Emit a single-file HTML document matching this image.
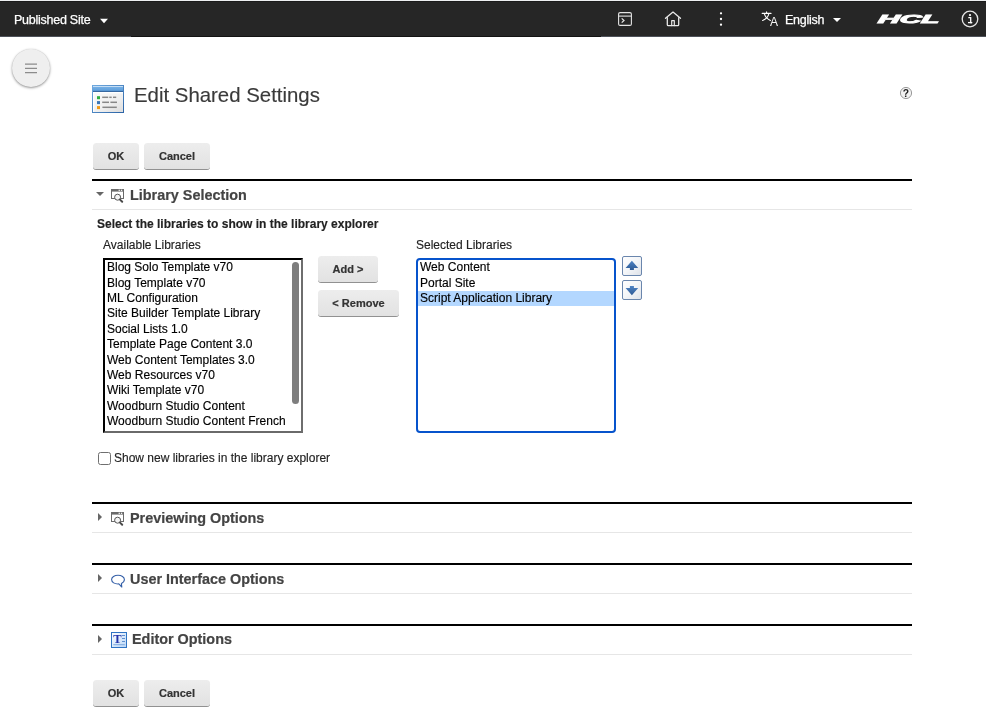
<!DOCTYPE html>
<html lang="en">
<head>
<meta charset="utf-8">
<title>Edit Shared Settings</title>
<style>
*{box-sizing:border-box;margin:0;padding:0}
html,body{width:986px;height:713px;overflow:hidden;background:#fff}
body{position:relative;font-family:"Liberation Sans",Arial,Helvetica,sans-serif;font-size:12px;color:#000}
#wrap{position:absolute;left:0;top:0;width:986px;height:713px;will-change:transform}
.abs{position:absolute}
#topbar{position:absolute;left:0;top:1px;width:986px;height:36px;background:linear-gradient(#1b1b1b 0,#1b1b1b 1px,#262626 1px,#262626 35px,#4d5159 35px,#4d5159 36px)}
#top0{position:absolute;left:0;top:0;width:986px;height:1px;background:#edeff1}
#topbar .dk{position:absolute;left:131px;top:35px;width:470px;height:1px;background:#131313}
#topbar .t{position:absolute;color:#fff;font-size:12.5px;line-height:16px;white-space:nowrap;letter-spacing:-.25px;-webkit-text-stroke:.25px #fff}
#menu{position:absolute;left:12px;top:49px;width:38px;height:38px;border-radius:50%;background:#efefef;box-shadow:0 1px 2.5px rgba(0,0,0,.42),0 0 1px rgba(0,0,0,.18)}
#menu i{position:absolute;left:13px;width:12px;height:1.5px;background:#8a8a8a}
h1{-webkit-text-stroke:.15px #3a3a3a;position:absolute;left:134px;top:83px;font-size:20.4px;line-height:24px;font-weight:normal;color:#3a3a3a;white-space:nowrap}
.btn{position:absolute;height:26px;background:linear-gradient(#ededed,#e2e2e2);border-radius:3.500px;box-shadow:0 1px 0 #919191,0 1px .5px rgba(0,0,0,.15);-webkit-text-stroke:.2px #333;font-weight:bold;font-size:11px;color:#333;text-align:center;line-height:26px;white-space:nowrap}
.sec{position:absolute;left:92px;width:820px;height:31px;border-top:2px solid #000;border-bottom:1px solid #e6e6e6}
.sec .h{position:absolute;left:38px;top:5px;-webkit-text-stroke:.2px #444;font-size:14.4px;line-height:18px;font-weight:bold;color:#444;white-space:nowrap}
.tri-d{position:absolute;width:0;height:0;border-left:4px solid transparent;border-right:4px solid transparent;border-top:4px solid #666}
.tri-r{position:absolute;width:0;height:0;border-top:4px solid transparent;border-bottom:4px solid transparent;border-left:4.5px solid #666}
.lbl{position:absolute;-webkit-text-stroke:.15px currentColor;font-size:12px;line-height:14px;white-space:nowrap;color:#222}
.list{position:absolute;background:#fff;overflow:hidden}
.list div{-webkit-text-stroke:.15px #000;height:15px;line-height:15px;padding-left:2px;font-size:12px;white-space:nowrap;color:#000}
#avail{left:103px;top:258px;width:200px;height:175px;border:2px solid #000;border-color:#000 #6e6e6e #6a6a6a #000}
#sel{left:416px;top:258px;width:200px;height:175px;border:2px solid #0653cc;border-radius:4px}
#sel .hl{background:#b3d7ff}
.thumb{position:absolute;left:292px;top:262px;width:7px;height:142px;border-radius:3.5px;background:#7e7e7e}
.ib{position:absolute;width:20px;height:20px;border:1px solid #6583ad;border-radius:2px;background:linear-gradient(135deg,#ffffff 0%,#f4f6f9 50%,#dfe3ea 100%)}
#cb{position:absolute;left:98px;top:452px;width:13px;height:13px;border:1px solid #6f6f6f;border-radius:2.5px;background:#fff}
</style>
</head>
<body>
<div id="wrap">

<div id="top0"></div>
<div id="topbar">
  <div class="dk"></div>
  <div class="t" style="left:14px;top:11px">Published Site</div>
  <svg class="abs" style="left:99px;top:17px" width="10" height="6" viewBox="0 0 10 6"><path d="M1 .8h8L5 5.300z" fill="#fff"/></svg>

  <!-- panel icon -->
  <svg class="abs" style="left:617px;top:10px" width="16" height="16" viewBox="0 0 16 16" fill="none" stroke="#e4e4e4" stroke-width="1.1">
    <rect x="1.6" y="1.6" width="12.8" height="12.8" rx="1.5"/>
    <path d="M1.6 5.1h12.8"/>
    <path d="M4.700 7.400l2.300 2.100-2.300 2.100" stroke-width="1.25"/>
  </svg>
  <!-- home -->
  <svg class="abs" style="left:663px;top:9px" width="20" height="18" viewBox="0 0 20 18" fill="none" stroke="#e8e8e8" stroke-width="1.3" stroke-linejoin="round" stroke-linecap="round">
    <path d="M2.500 8.300L10 2.100l7.500 6.200"/>
    <path d="M4.300 7.600v7.100q0 .9 .9 .9h9.600q.9 0 .9-.9V7.600"/>
    <path d="M8.700 15.600v-4.900h2.600v4.900" stroke-width="1.2"/>
  </svg>
  <!-- kebab -->
  <svg class="abs" style="left:718px;top:10px" width="6" height="16" viewBox="0 0 6 16" fill="#fff"><circle cx="3" cy="2.300" r="1.150"/><circle cx="3" cy="8" r="1.150"/><circle cx="3" cy="13.700" r="1.150"/></svg>
  <!-- translate -->
  <svg class="abs" style="left:761px;top:10px" width="19" height="18" viewBox="0 0 19 18">
    <g fill="none" stroke="#fff" stroke-width="1.1" stroke-linecap="round">
      <path d="M1.200 2.400h8.800"/><path d="M5.600 .9v1.500"/>
      <path d="M7.900 2.700C7.200 5.700 4.900 8.300 1.600 9.500"/>
      <path d="M3.300 2.700c.8 3 3 5.300 6.100 6.700"/>
    </g>
    <text x="9" y="15.400" font-family="Liberation Sans,Arial,sans-serif" font-size="12" fill="#f4f4f4">A</text>
  </svg>
  <div class="t" style="left:785px;top:11px">English</div>
  <svg class="abs" style="left:832px;top:16px" width="10" height="6" viewBox="0 0 10 6"><path d="M1 1h8L5 5z" fill="#fff"/></svg>

  <!-- HCL logo as text -->
  <svg class="abs" style="left:874px;top:9px" width="70" height="18" viewBox="0 0 70 18">
    <g transform="translate(3.6 13) skewX(-9)"><text x="0" y="0" font-family="Liberation Sans,Arial,sans-serif" font-size="11.6" font-weight="bold" font-style="italic" fill="#fff" textLength="61.5" lengthAdjust="spacingAndGlyphs" stroke="#fff" stroke-width=".9">HCL</text></g>
  </svg>
  <!-- info -->
  <svg class="abs" style="left:960px;top:8px" width="20" height="20" viewBox="0 0 20 20">
    <circle cx="10" cy="10" r="7.8" fill="none" stroke="#e6e6e6" stroke-width="1.3"/>
    <circle cx="10" cy="6.1" r="1.1" fill="#fff"/>
    <path d="M8.3 8.6h2.4v5h1.3" fill="none" stroke="#fff" stroke-width="1.3"/>
    <path d="M8 13.6h4.3" fill="none" stroke="#fff" stroke-width="1.3"/>
  </svg>
</div>

<div id="menu"><svg class="abs" style="left:0;top:0" width="38" height="38" viewBox="0 0 38 38"><path d="M13 15.100h12M13 19.300h12M13 23.700h12" stroke="#8c8c8c" stroke-width="1.300" fill="none"/></svg></div>

<!-- page icon -->
<svg class="abs" style="left:92px;top:85px" width="32" height="28" viewBox="0 0 32 28">
  <defs>
    <linearGradient id="g1" x1="0" y1="0" x2="0" y2="1"><stop offset="0" stop-color="#79b3e8"/><stop offset="1" stop-color="#5a9bd8"/></linearGradient>
    <linearGradient id="g2" x1="0" y1="0" x2="1" y2="1"><stop offset="0" stop-color="#fafafa"/><stop offset=".6" stop-color="#eeeeee"/><stop offset="1" stop-color="#dcdcdc"/></linearGradient>
    <linearGradient id="g0" x1="0" y1="0" x2="1" y2="1"><stop offset="0" stop-color="#6fa9df"/><stop offset="1" stop-color="#2c64a6"/></linearGradient>
  </defs>
  <rect x=".5" y=".5" width="31" height="27" fill="#fff" stroke="url(#g0)"/>
  <rect x="1" y="1" width="30" height="5.600" fill="url(#g1)"/>
  <rect x="1" y="1.100" width="30" height=".9" fill="#cfe4f6"/>
  <rect x="1" y="5.900" width="30" height="1" fill="#2d5f9a"/>
  <rect x="2.200" y="8.300" width="28.700" height="18.700" fill="url(#g2)"/>
  <rect x="5" y="11.200" width="3" height="3" fill="#2fae3f"/>
  <rect x="5" y="16.100" width="3" height="3" fill="#3a76b6"/>
  <rect x="5" y="21.100" width="3" height="3" fill="#f39a12"/>
  <g stroke="#6f6f6f" stroke-width="1.500" opacity=".8" fill="none">
    <path d="M10.200 12.300h6" /><path d="M17.300 12.300h2.400"/><path d="M21 12.300h3.200"/>
    <path d="M10.200 17.300h6.800"/><path d="M18.400 17.300h6.600"/>
    <path d="M10.400 22.300h14.400"/>
  </g>
</svg>
<h1>Edit Shared Settings</h1>

<!-- help -->
<svg class="abs" style="left:899px;top:86px" width="14" height="14" viewBox="0 0 14 14">
  <circle cx="7" cy="7" r="5.6" fill="#f2f2f2" stroke="#9a9a9a" stroke-width="1"/>
  <text x="7" y="10.700" text-anchor="middle" font-family="Liberation Sans,Arial,sans-serif" font-size="10.3" font-weight="bold" fill="#222">?</text>
</svg>

<div class="btn" style="left:93px;top:143px;width:46px">OK</div>
<div class="btn" style="left:144px;top:143px;width:66px">Cancel</div>

<!-- Library Selection -->
<div class="sec" style="top:179px">
  <div class="tri-d" style="left:4px;top:11px"></div>
  <svg class="abs" style="left:18px;top:7px" width="16" height="16" viewBox="0 0 16 16">
    <rect x="1.5" y="1.5" width="12" height="9" fill="#fff" stroke="#6a6a6a"/>
    <rect x="1" y="1" width="13" height="2.6" fill="#6a6a6a"/>
    <rect x="8.6" y="1.7" width="1.3" height="1.2" fill="#fff"/><rect x="10.9" y="1.7" width="1.3" height="1.2" fill="#fff"/>
    <circle cx="7.6" cy="9.2" r="3" fill="#f4f4f4" stroke="#555" stroke-width="1"/>
    <path d="M10 11.600l2.200 2.200" stroke="#4a4a4a" stroke-width="2" stroke-linecap="round"/>
  </svg>
  <div class="h">Library Selection</div>
</div>

<div class="lbl" style="left:97px;top:217px;font-weight:bold">Select the libraries to show in the library explorer</div>
<div class="lbl" style="left:103px;top:238px">Available Libraries</div>
<div class="lbl" style="left:416px;top:238px">Selected Libraries</div>

<div class="list" id="avail">
  <div style="height:16px">Blog Solo Template v70</div>
  <div style="height:15px">Blog Template v70</div>
  <div style="height:15px">ML Configuration</div>
  <div style="height:16px">Site Builder Template Library</div>
  <div style="height:15px">Social Lists 1.0</div>
  <div style="height:16px">Template Page Content 3.0</div>
  <div style="height:15px">Web Content Templates 3.0</div>
  <div style="height:15px">Web Resources v70</div>
  <div style="height:16px">Wiki Template v70</div>
  <div style="height:15px">Woodburn Studio Content</div>
  <div style="height:15px">Woodburn Studio Content French</div>
</div>
<div class="thumb"></div>

<div class="btn" style="left:318px;top:256px;width:60px">Add &gt;</div>
<div class="btn" style="left:318px;top:290px;width:81px">&lt; Remove</div>

<div class="list" id="sel">
  <div style="height:16px">Web Content</div>
  <div style="height:15px">Portal Site</div>
  <div class="hl">Script Application Library</div>
</div>

<svg class="abs" style="left:622px;top:256px" width="20" height="20" viewBox="0 0 20 20">
  <defs>
    <linearGradient id="gb" x1="0" y1="0" x2="1" y2="1"><stop offset="0" stop-color="#ffffff"/><stop offset=".5" stop-color="#f3f5f8"/><stop offset="1" stop-color="#dde1e8"/></linearGradient>
    <linearGradient id="ga" x1="0" y1="0" x2="0" y2="1"><stop offset="0" stop-color="#4f84c4"/><stop offset="1" stop-color="#2d5994"/></linearGradient>
  </defs>
  <rect x=".5" y=".5" width="19" height="19" rx="1.500" fill="url(#gb)" stroke="#6a86ad"/>
  <path d="M9.900 4.700L16.200 11.900H11.900V14H7.900V11.900H3.600z" fill="url(#ga)"/>
</svg>
<svg class="abs" style="left:622px;top:280px" width="20" height="20" viewBox="0 0 20 20">
  <rect x=".5" y=".5" width="19" height="19" rx="1.500" fill="url(#gb)" stroke="#6a86ad"/>
  <path d="M9.900 15.200L16.200 8H11.900V6.100H7.900V8H3.600z" fill="url(#ga)"/>
</svg>

<div id="cb"></div>
<div class="lbl" style="left:114px;top:451px">Show new libraries in the library explorer</div>

<!-- Previewing Options -->
<div class="sec" style="top:502px">
  <div class="tri-r" style="left:6px;top:9px"></div>
  <svg class="abs" style="left:18px;top:7px" width="16" height="16" viewBox="0 0 16 16">
    <rect x="1.5" y="1.5" width="12" height="9" fill="#fff" stroke="#6a6a6a"/>
    <rect x="1" y="1" width="13" height="2.6" fill="#6a6a6a"/>
    <rect x="8.6" y="1.7" width="1.3" height="1.2" fill="#fff"/><rect x="10.9" y="1.7" width="1.3" height="1.2" fill="#fff"/>
    <circle cx="7.6" cy="9.2" r="3" fill="#f4f4f4" stroke="#555" stroke-width="1"/>
    <path d="M10 11.600l2.200 2.200" stroke="#4a4a4a" stroke-width="2" stroke-linecap="round"/>
  </svg>
  <div class="h">Previewing Options</div>
</div>

<!-- User Interface Options -->
<div class="sec" style="top:563px">
  <div class="tri-r" style="left:6px;top:9px"></div>
  <svg class="abs" style="left:18px;top:7.500px" width="16" height="18" viewBox="0 0 16 18">
    <path d="M8 2.2c3.5 0 6.4 1.9 6.4 4.4 0 1.6-1.2 3-3 3.8l.4 3.6-3-3.1C4.600 11.200 1.600 9.300 1.600 6.600 1.600 4.100 4.500 2.200 8 2.200z" fill="#fff" stroke="#3560a8" stroke-width="1.1" stroke-linejoin="round"/>
  </svg>
  <div class="h">User Interface Options</div>
</div>

<!-- Editor Options -->
<div class="sec" style="top:624px">
  <div class="tri-r" style="left:6px;top:9px"></div>
  <svg class="abs" style="left:19px;top:6px" width="16" height="16" viewBox="0 0 16 16">
    <defs><linearGradient id="g3" x1="0" y1="0" x2="1" y2="1"><stop offset="0" stop-color="#ffffff"/><stop offset="1" stop-color="#b9d6f7"/></linearGradient></defs>
    <rect x=".5" y=".5" width="15" height="15" fill="url(#g3)" stroke="#2f74c4"/>
    <text x="6.300" y="11.3" text-anchor="middle" font-family="Liberation Serif,serif" font-size="12.5" font-weight="bold" fill="#2233aa">T</text>
    <rect x="11" y="3" width="3" height="1" fill="#5d8fd0"/><rect x="11" y="6" width="3" height="1" fill="#5d8fd0"/><rect x="11" y="9" width="3" height="1" fill="#5d8fd0"/>
    <rect x="2.3" y="12.2" width="11.5" height="1" fill="#7da9de"/>
  </svg>
  <div class="h" style="left:40px;top:4px">Editor Options</div>
</div>

<div class="btn" style="left:93px;top:680px;width:46px">OK</div>
<div class="btn" style="left:144px;top:680px;width:66px">Cancel</div>

</div>
</body>
</html>
